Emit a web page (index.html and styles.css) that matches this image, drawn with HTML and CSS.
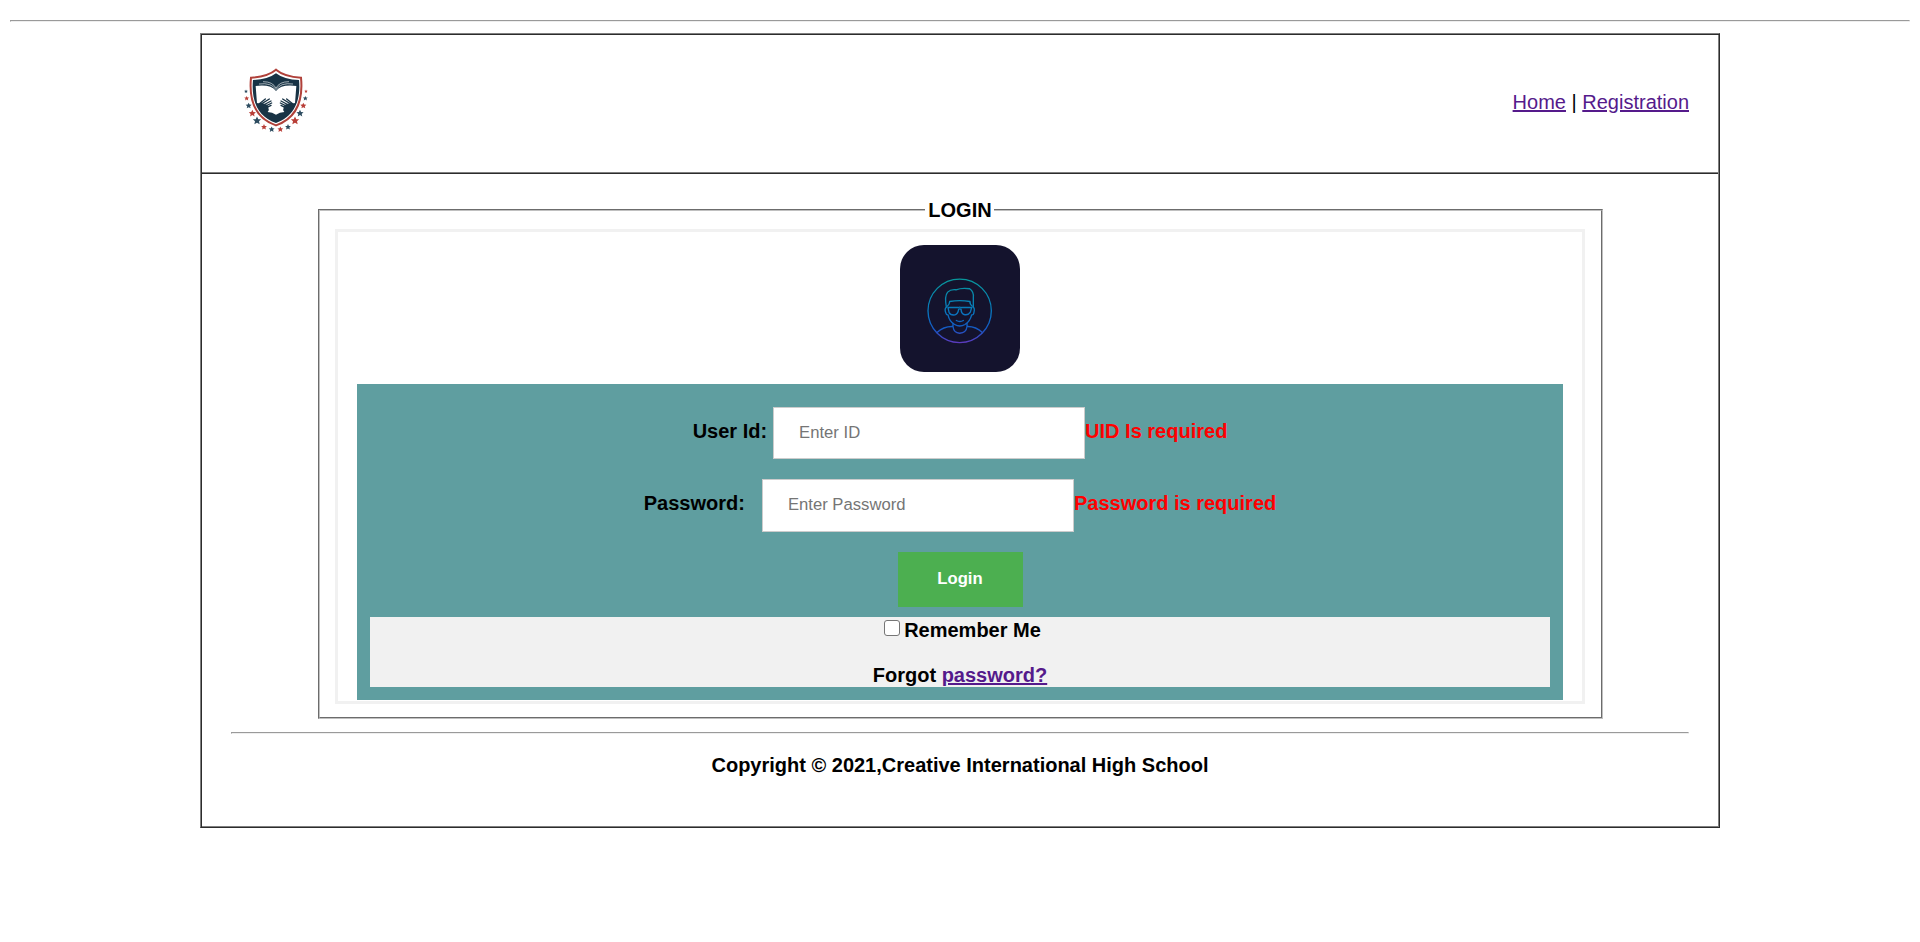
FILE: index.html
```html
<!DOCTYPE html>
<html lang="en">
<head>
<meta charset="utf-8">
<title>Login</title>
<link rel="stylesheet" href="styles.css">
</head>
<body>
<hr class="rule">
<div class="page">
  <header class="header">
    <svg class="logo" viewBox="159 168 198 204" aria-label="School crest">
      <defs><path id="star" d="M0-12.5 3.8-4.5 12.5-4 6 2 8 11 0 6.2-8 11-6 2-12.5-4-3.8-4.5Z"/></defs>
      <path d="M258 179Q283 200 333 203C340 275 319 325 258 346C197 325 176 275 183 203Q233 200 258 179Z" fill="#fff" stroke="#b0413a" stroke-width="6"/>
      <path d="M258 190Q283 209 327 210C333 272 313 320 258 339C203 320 183 272 189 210Q233 209 258 190Z" fill="#183345"/>
      <path d="M197 228Q242 222 258 243Q274 222 319 228L315 280L290 290Q273 294 283 306Q269 307 258 314Q247 307 233 306Q243 294 226 290L201 280Z" fill="#fff"/>
      <path d="M207 222Q244 217 258 239Q272 217 309 222M219 215Q249 215 258 235Q267 215 297 215" fill="none" stroke="#e8edef" stroke-width="2"/>
      <g id="hand" fill="none" stroke="#183345" stroke-linecap="round" stroke-width="4">
        <path d="M208 281 226 267M211 284 238 267M215 288 243 273M219 292 245 279M224 296 243 286"/>
        <path d="M203 281Q216 279 229 284L235 290 229 302Q214 300 203 281Z" fill="#183345" stroke-width="2"/>
      </g>
      <use href="#hand" transform="matrix(-1 0 0 1 516 0)"/>
      <g fill="#2d4c60">
        <use href="#star" transform="translate(168 244) scale(.45)"/><use href="#star" transform="translate(346 265) scale(.58)"/>
        <use href="#star" transform="translate(176 287) scale(.72)"/><use href="#star" transform="translate(330 310) scale(.85)"/>
        <use href="#star" transform="translate(201 332)"/><use href="#star" transform="translate(294 351) scale(.7)"/>
        <use href="#star" transform="translate(245 358) scale(.7)"/>
      </g>
      <g fill="#b83e37">
        <use href="#star" transform="translate(348 244) scale(.42)"/><use href="#star" transform="translate(170 265) scale(.58)"/>
        <use href="#star" transform="translate(340 287) scale(.72)"/><use href="#star" transform="translate(187 310) scale(.85)"/>
        <use href="#star" transform="translate(315 332)"/><use href="#star" transform="translate(222 351) scale(.7)"/>
        <use href="#star" transform="translate(271 358) scale(.7)"/>
      </g>
    </svg>
    <nav class="nav"><a href="#">Home</a> | <a href="#">Registration</a></nav>
  </header>
  <main class="content">
    <fieldset class="login">
      <legend class="title">LOGIN</legend>
      <form class="form">
        <svg class="avatar" viewBox="30 165 360 380" preserveAspectRatio="none" aria-label="Avatar">
          <defs><linearGradient id="neon" gradientUnits="userSpaceOnUse" x1="0" y1="265" x2="0" y2="460">
            <stop offset="0" stop-color="#08979a"/><stop offset=".5" stop-color="#0878bd"/><stop offset=".78" stop-color="#1558c4"/><stop offset="1" stop-color="#6038bd"/>
          </linearGradient></defs>
          <path fill="#14132d" d="M30 165H390V545H30Z"/>
          <g fill="none" stroke="url(#neon)" stroke-width="4" stroke-linejoin="round" stroke-linecap="round">
            <circle cx="209" cy="362" r="95"/>
            <path d="M169 350Q163 318 173 306Q182 297 198 299Q216 292 239 296Q252 305 250 322V350"/>
            <path d="M172 348Q179 342 179 334Q209 329 240 334Q239 342 247 348"/>
            <path d="M169 351Q163 356 167 367Q169 375 174 374Q178 394 194 403Q209 412 225 403Q240 394 245 374Q251 375 252 366Q255 354 249 351"/>
            <path d="M174 352H204Q209 350 214 352H245L241 366Q235 376 222 373Q214 371 213 357Q209 355 206 357Q204 372 195 374Q181 376 177 366Z"/>
            <path d="M199 391Q210 397 220 391M189 400V409Q161 408 141 427M231 400V409Q257 408 277 427M189 409Q191 428 209 429Q229 428 231 409"/>
          </g>
        </svg>
        <div class="panel">
          <div class="row"><label for="uid">User Id:</label><input class="field" id="uid" type="text" placeholder="Enter ID"><span class="error">UID Is required</span></div>
          <div class="row row-password"><label for="pwd">Password:</label><input class="field" id="pwd" type="password" placeholder="Enter Password"><span class="error">Password is required</span></div>
          <button class="submit" type="button">Login</button>
          <div class="options">
            <label class="remember"><input class="check" type="checkbox">Remember Me</label>
            <div>Forgot <a href="#">password?</a></div>
          </div>
        </div>
      </form>
    </fieldset>
    <hr class="rule">
    <footer class="footer">Copyright © 2021,Creative International High School</footer>
  </main>
</div>
</body>
</html>
```
FILE: styles.css
```css
* { box-sizing: border-box; }
body {
  margin: 20px 10px 0;
  background: #fff;
  color: #000;
  font: 20px/23px "Liberation Sans", Arial, sans-serif;
}
a { color: #551a8b; text-decoration: underline; }
.rule {
  height: 2px;
  margin: 0;
  border: 1px solid;
  border-color: #9a9a9a #eee #eee #9a9a9a;
}
.page {
  width: 1520px;
  height: 795px;
  margin: 11px auto 0;
  padding: 1px;
  border: 1px solid;
  border-color: #808080 #2c2c2c #2c2c2c #808080;
  box-shadow: inset 1px 1px #2c2c2c, inset -1px -1px #808080;
}
.header {
  display: flex;
  align-items: center;
  justify-content: space-between;
  height: 138px;
  padding: 0 29px 0 41px;
  border-bottom: 1px solid #808080;
}
.logo { width: 66px; height: 68px; margin-bottom: 7px; }
.nav { margin-top: -3px; }
.content {
  padding: 26px 29px 0;
  border-top: 1px solid #2c2c2c;
  font-weight: bold;
  text-align: center;
}
.login {
  width: 1285px;
  height: 521px;
  margin: -2px auto 0;
  padding: 8px 16px 14px 15px;
  border: 2px groove #c0c0c0;
}
.title { margin: 0 auto; padding: 1px 2px 0 3px; line-height: 22px; }
.form {
  width: 1250px;
  height: 475px;
  padding: 13px 19px 1px;
  border: 3px solid #f1f1f1;
}
.avatar {
  display: block;
  width: 120px;
  height: 127px;
  margin: 0 auto 12px;
  border-radius: 24px;
}
.panel { height: 316px; padding: 13px; background: #5f9ea0; }
.row {
  display: flex;
  align-items: baseline;
  justify-content: center;
  height: 72px;
  padding: 10px 0 0 1px;
}
.row label { margin-right: 6px; }
.row-password { height: 73px; }
.row-password label { margin-right: 17px; }
.field {
  width: 312px;
  height: 52px;
  padding: 0 25px;
  border: 1px solid #ccc;
  background: #fff;
  font: 16.67px "Liberation Sans", Arial, sans-serif;
}
.row-password .field { height: 53px; padding-bottom: 1px; }
.field::placeholder { color: #757575; }
.error { color: #f00; }
.submit {
  display: block;
  width: 125px;
  height: 55px;
  margin: 10px auto 10px 528px;
  padding: 0 0 2px;
  border: 0;
  background: #4caf50;
  color: #fff;
  font: bold 16.67px "Liberation Sans", Arial, sans-serif;
}
.options {
  display: flex;
  flex-direction: column;
  gap: 22px;
  height: 70px;
  padding: 2px 0 0 1px;
  background: #f1f1f1;
}
.remember { display: flex; justify-content: center; }
.check {
  appearance: none;
  width: 16px;
  height: 16px;
  margin: 1px 4px 0 5px;
  border: 1px solid #767676;
  border-radius: 3px;
  background: #fff;
}
.content .rule { margin-top: 13px; }
.footer { margin-top: 20px; }
```
